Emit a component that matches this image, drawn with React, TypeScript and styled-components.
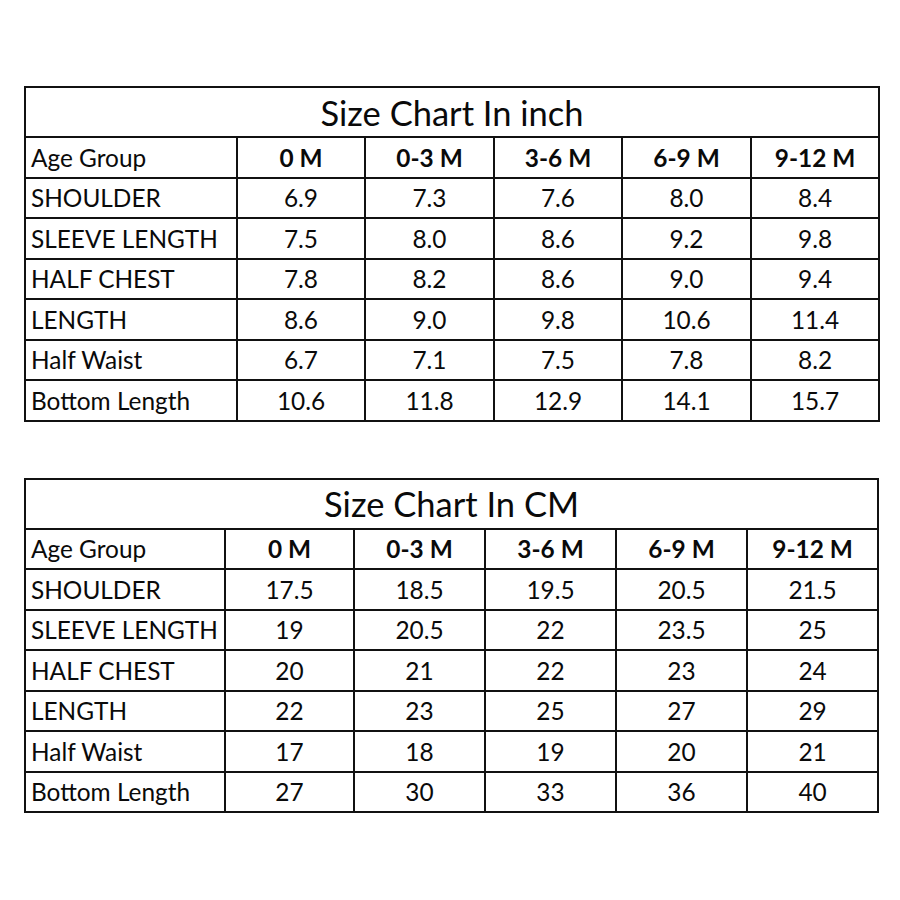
import React from "react";
import styled, { createGlobalStyle } from "styled-components";

const GlobalStyle = createGlobalStyle`
  html, body {
    margin: 0;
    padding: 0;
    background: #ffffff;
  }
  body {
    font-family: Lato, "Open Sans", "Liberation Sans", sans-serif;
    color: #0a0a0a;
  }
`;

const Page = styled.div`
  width: 900px;
  height: 900px;
  box-sizing: border-box;
  padding: 86px 0 0 24px;
  display: flex;
  flex-direction: column;
  gap: 56px;
`;

const Table = styled.table<{ $width: number }>`
  border-collapse: collapse;
  table-layout: fixed;
  width: ${(p) => p.$width}px;
  border: 2px solid #111;
`;

const TitleCell = styled.th`
  height: 48px;
  padding: 0;
  font-size: 34.5px;
  font-weight: 400;
  text-align: center;
  border: 2px solid #111;
`;

const Row = styled.tr`
  height: 40.5px;
`;

const LabelCell = styled.td`
  padding: 0 0 0 5px;
  font-size: 24.4px;
  text-align: left;
  white-space: nowrap;
  overflow: hidden;
  border: 2px solid #111;
`;

const ValueCell = styled.td<{ $bold?: boolean }>`
  padding: 0;
  font-size: 24.4px;
  font-weight: ${(p) => (p.$bold ? 700 : 400)};
  text-align: center;
  border: 2px solid #111;
`;

type Chart = {
  title: string;
  widths: number[];
  rows: [string, string[]][];
};

const sizes = ["0 M", "0-3 M", "3-6 M", "6-9 M", "9-12 M"];

const charts: Chart[] = [
  {
    title: "Size Chart In inch",
    widths: [212, 128, 129, 128, 129, 128],
    rows: [
      ["SHOULDER", ["6.9", "7.3", "7.6", "8.0", "8.4"]],
      ["SLEEVE LENGTH", ["7.5", "8.0", "8.6", "9.2", "9.8"]],
      ["HALF CHEST", ["7.8", "8.2", "8.6", "9.0", "9.4"]],
      ["LENGTH", ["8.6", "9.0", "9.8", "10.6", "11.4"]],
      ["Half Waist", ["6.7", "7.1", "7.5", "7.8", "8.2"]],
      ["Bottom Length", ["10.6", "11.8", "12.9", "14.1", "15.7"]],
    ],
  },
  {
    title: "Size Chart In CM",
    widths: [200, 129, 131, 131, 131, 131],
    rows: [
      ["SHOULDER", ["17.5", "18.5", "19.5", "20.5", "21.5"]],
      ["SLEEVE LENGTH", ["19", "20.5", "22", "23.5", "25"]],
      ["HALF CHEST", ["20", "21", "22", "23", "24"]],
      ["LENGTH", ["22", "23", "25", "27", "29"]],
      ["Half Waist", ["17", "18", "19", "20", "21"]],
      ["Bottom Length", ["27", "30", "33", "36", "40"]],
    ],
  },
];

const SizeTable = ({ chart }: { chart: Chart }) => {
  const total = chart.widths.reduce((a, b) => a + b, 0) + 2;
  return (
    <Table $width={total}>
      <colgroup>
        {chart.widths.map((w, i) => (
          <col key={i} style={{ width: w }} />
        ))}
      </colgroup>
      <thead>
        <tr>
          <TitleCell colSpan={6}>{chart.title}</TitleCell>
        </tr>
      </thead>
      <tbody>
        <Row>
          <LabelCell>Age Group</LabelCell>
          {sizes.map((s) => (
            <ValueCell key={s} $bold>
              {s}
            </ValueCell>
          ))}
        </Row>
        {chart.rows.map(([label, values]) => (
          <Row key={label}>
            <LabelCell>{label}</LabelCell>
            {values.map((v, i) => (
              <ValueCell key={i}>{v}</ValueCell>
            ))}
          </Row>
        ))}
      </tbody>
    </Table>
  );
};

const App = () => {
  return (
    <>
      <GlobalStyle />
      <Page>
        {charts.map((c) => (
          <SizeTable key={c.title} chart={c} />
        ))}
      </Page>
    </>
  );
};

export default App;
